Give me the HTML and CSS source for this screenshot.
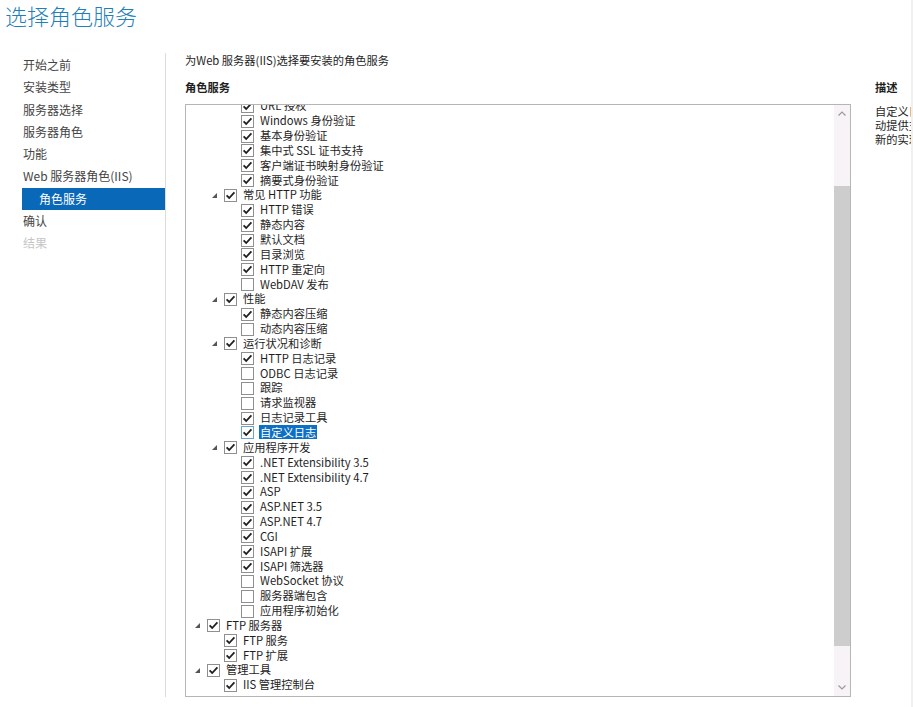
FILE: index.html
```html
<!DOCTYPE html>
<html lang="zh-CN">
<head>
<meta charset="utf-8">
<title>选择角色服务</title>
<link rel="stylesheet" href="styles.css">
</head>
<body>
<div class="screen">
  <div class="window">
    <h1 class="title">选择角色服务</h1>
    <div class="content">
      <nav class="nav">
        <div class="nav-item">开始之前</div>
        <div class="nav-item">安装类型</div>
        <div class="nav-item">服务器选择</div>
        <div class="nav-item">服务器角色</div>
        <div class="nav-item">功能</div>
        <div class="nav-item">Web 服务器角色(IIS)</div>
        <div class="nav-item sub selected">角色服务</div>
        <div class="nav-item">确认</div>
        <div class="nav-item disabled">结果</div>
      </nav>
      <main class="main">
        <div class="intro">为Web 服务器(IIS)选择要安装的角色服务</div>
        <div class="columns">
          <section class="services">
            <div class="heading">角色服务</div>
            <div class="treebox">
              <div class="tree-view">
                <ul class="tree">
                  <li class="row l3"><span class="exp"></span><span class="cb on"></span><span class="label">URL 授权</span></li>
                  <li class="row l3"><span class="exp"></span><span class="cb on"></span><span class="label">Windows 身份验证</span></li>
                  <li class="row l3"><span class="exp"></span><span class="cb on"></span><span class="label">基本身份验证</span></li>
                  <li class="row l3"><span class="exp"></span><span class="cb on"></span><span class="label">集中式 SSL 证书支持</span></li>
                  <li class="row l3"><span class="exp"></span><span class="cb on"></span><span class="label">客户端证书映射身份验证</span></li>
                  <li class="row l3"><span class="exp"></span><span class="cb on"></span><span class="label">摘要式身份验证</span></li>
                  <li class="row l2"><span class="exp open"></span><span class="cb on"></span><span class="label">常见 HTTP 功能</span></li>
                  <li class="row l3"><span class="exp"></span><span class="cb on"></span><span class="label">HTTP 错误</span></li>
                  <li class="row l3"><span class="exp"></span><span class="cb on"></span><span class="label">静态内容</span></li>
                  <li class="row l3"><span class="exp"></span><span class="cb on"></span><span class="label">默认文档</span></li>
                  <li class="row l3"><span class="exp"></span><span class="cb on"></span><span class="label">目录浏览</span></li>
                  <li class="row l3"><span class="exp"></span><span class="cb on"></span><span class="label">HTTP 重定向</span></li>
                  <li class="row l3"><span class="exp"></span><span class="cb"></span><span class="label">WebDAV 发布</span></li>
                  <li class="row l2"><span class="exp open"></span><span class="cb on"></span><span class="label">性能</span></li>
                  <li class="row l3"><span class="exp"></span><span class="cb on"></span><span class="label">静态内容压缩</span></li>
                  <li class="row l3"><span class="exp"></span><span class="cb"></span><span class="label">动态内容压缩</span></li>
                  <li class="row l2"><span class="exp open"></span><span class="cb on"></span><span class="label">运行状况和诊断</span></li>
                  <li class="row l3"><span class="exp"></span><span class="cb on"></span><span class="label">HTTP 日志记录</span></li>
                  <li class="row l3"><span class="exp"></span><span class="cb"></span><span class="label">ODBC 日志记录</span></li>
                  <li class="row l3"><span class="exp"></span><span class="cb"></span><span class="label">跟踪</span></li>
                  <li class="row l3"><span class="exp"></span><span class="cb"></span><span class="label">请求监视器</span></li>
                  <li class="row l3"><span class="exp"></span><span class="cb on"></span><span class="label">日志记录工具</span></li>
                  <li class="row l3 sel"><span class="exp"></span><span class="cb on"></span><span class="label">自定义日志</span></li>
                  <li class="row l2"><span class="exp open"></span><span class="cb on"></span><span class="label">应用程序开发</span></li>
                  <li class="row l3"><span class="exp"></span><span class="cb on"></span><span class="label">.NET Extensibility 3.5</span></li>
                  <li class="row l3"><span class="exp"></span><span class="cb on"></span><span class="label">.NET Extensibility 4.7</span></li>
                  <li class="row l3"><span class="exp"></span><span class="cb on"></span><span class="label">ASP</span></li>
                  <li class="row l3"><span class="exp"></span><span class="cb on"></span><span class="label">ASP.NET 3.5</span></li>
                  <li class="row l3"><span class="exp"></span><span class="cb on"></span><span class="label">ASP.NET 4.7</span></li>
                  <li class="row l3"><span class="exp"></span><span class="cb on"></span><span class="label">CGI</span></li>
                  <li class="row l3"><span class="exp"></span><span class="cb on"></span><span class="label">ISAPI 扩展</span></li>
                  <li class="row l3"><span class="exp"></span><span class="cb on"></span><span class="label">ISAPI 筛选器</span></li>
                  <li class="row l3"><span class="exp"></span><span class="cb"></span><span class="label">WebSocket 协议</span></li>
                  <li class="row l3"><span class="exp"></span><span class="cb"></span><span class="label">服务器端包含</span></li>
                  <li class="row l3"><span class="exp"></span><span class="cb"></span><span class="label">应用程序初始化</span></li>
                  <li class="row l1"><span class="exp open"></span><span class="cb on"></span><span class="label">FTP 服务器</span></li>
                  <li class="row l2"><span class="exp"></span><span class="cb on"></span><span class="label">FTP 服务</span></li>
                  <li class="row l2"><span class="exp"></span><span class="cb on"></span><span class="label">FTP 扩展</span></li>
                  <li class="row l1"><span class="exp open"></span><span class="cb on"></span><span class="label">管理工具</span></li>
                  <li class="row l2"><span class="exp"></span><span class="cb on"></span><span class="label">IIS 管理控制台</span></li>
                </ul>
              </div>
              <div class="scrollbar">
                <div class="sb-arrow"><svg width="8" height="5" viewBox="0 0 8 5"><path d="M0.5 4.5L4 1L7.5 4.5" fill="none" stroke="#9a9a9a" stroke-width="1.2"/></svg></div>
                <div class="sb-track"><div class="sb-thumb"></div></div>
                <div class="sb-arrow"><svg width="8" height="5" viewBox="0 0 8 5"><path d="M0.5 0.5L4 4L7.5 0.5" fill="none" stroke="#9a9a9a" stroke-width="1.2"/></svg></div>
              </div>
            </div>
          </section>
          <aside class="desc">
            <div class="heading">描述</div>
            <p class="desc-text"><span>自定义日志记录为 Web 服务器活</span><span>动提供支持，可按自定义格式生成</span><span>新的实现方式的日志文件。</span></p>
          </aside>
        </div>
      </main>
    </div>
  </div>
  <div class="edge"></div>
</div>
</body>
</html>
```

FILE: styles.css
```css
* { box-sizing: border-box; margin: 0; padding: 0; }
html, body { height: 100%; }
body {
  margin: 0;
  background: #fff;
  font-family: "Noto Sans CJK SC", "Noto Sans", sans-serif;
  color: #1e1e1e;
  overflow: hidden;
}
.screen { display: flex; width: 913px; height: 707px; }
.window { flex: 1; min-width: 0; overflow: hidden; display: flex; flex-direction: column; }
.edge { width: 2px; flex: none; background: #f0f0f0; }

.title {
  font-weight: 300;
  font-size: 22px;
  line-height: 31px;
  height: 53px;
  color: #1f80b8;
  padding-left: 5px;
}

.content { display: flex; height: 644px; }

.nav {
  width: 166px;
  flex: none;
  border-right: 1px solid #dcdcdc;
  padding: 1px 0 0 22px;
  font-size: 12px;
  color: #444;
}
.nav-item { height: 22.25px; line-height: 22.25px; padding-left: 1px; white-space: nowrap; }
.nav-item.sub { padding-left: 17px; }
.nav-item.selected { background: #0a68b8; color: #fff; }
.nav-item.disabled { color: #c6c6c6; }

.main {
  flex: 1;
  min-width: 0;
  padding-left: 19px;
  font-size: 11.25px;
  display: flex;
  flex-direction: column;
}
.intro { line-height: 14px; height: 14px; white-space: nowrap; }
.columns { display: flex; gap: 24px; margin-top: 13px; flex: 1; min-height: 0; }
.services { width: 666px; flex: none; display: flex; flex-direction: column; }
.heading { font-weight: bold; line-height: 14px; height: 14px; white-space: nowrap; }

.treebox {
  margin-top: 10px;
  height: 593px;
  border: 1px solid #b5b5b5;
  display: flex;
}
.tree-view { flex: 1; overflow: hidden; }
.tree { list-style: none; margin-top: -7px; }
.row { display: flex; align-items: center; height: 14.85px; white-space: nowrap; }
.l1 { padding-left: 7px; }
.l2 { padding-left: 24px; }
.l3 { padding-left: 41px; }
.exp { width: 14px; height: 13px; flex: none; position: relative; }
.exp.open::before {
  content: "";
  position: absolute;
  left: 2px;
  top: 5px;
  width: 0;
  height: 0;
  border-style: solid;
  border-width: 0 0 5px 5px;
  border-color: transparent transparent #555 transparent;
}
.cb {
  width: 13px;
  height: 13px;
  border: 1px solid #8f8f8f;
  background: #fff;
  flex: none;
  margin-right: 6px;
  margin-top: 2px;
}
.cb.on {
  background: #fff url("data:image/svg+xml,%3Csvg xmlns='http://www.w3.org/2000/svg' width='11' height='11' viewBox='0 0 11 11'%3E%3Cpath d='M1.6 5.4L4.2 8L9.4 2.4' fill='none' stroke='%23202020' stroke-width='1.8'/%3E%3C/svg%3E") center / 11px 11px no-repeat;
}
.label { line-height: 14px; }
.row.sel .label { background: #0d6fc6; color: #fff; padding: 0 1px; margin-left: -1px; }
.row.sel .cb { border-color: #6aa3d8; }

.scrollbar { width: 16px; flex: none; background: #f7f3f7; display: flex; flex-direction: column; }
.sb-arrow { height: 17px; display: flex; align-items: center; justify-content: center; }
.sb-arrow svg { display: block; }
.sb-track { flex: 1; display: flex; flex-direction: column; }
.sb-thumb { margin-top: 64px; height: 460px; background: #cdcdcd; }

.desc { flex: 1; min-width: 0; overflow: hidden; }
.desc-text { margin-top: 10px; line-height: 14px; white-space: nowrap; }
.desc-text span { display: block; }
```
